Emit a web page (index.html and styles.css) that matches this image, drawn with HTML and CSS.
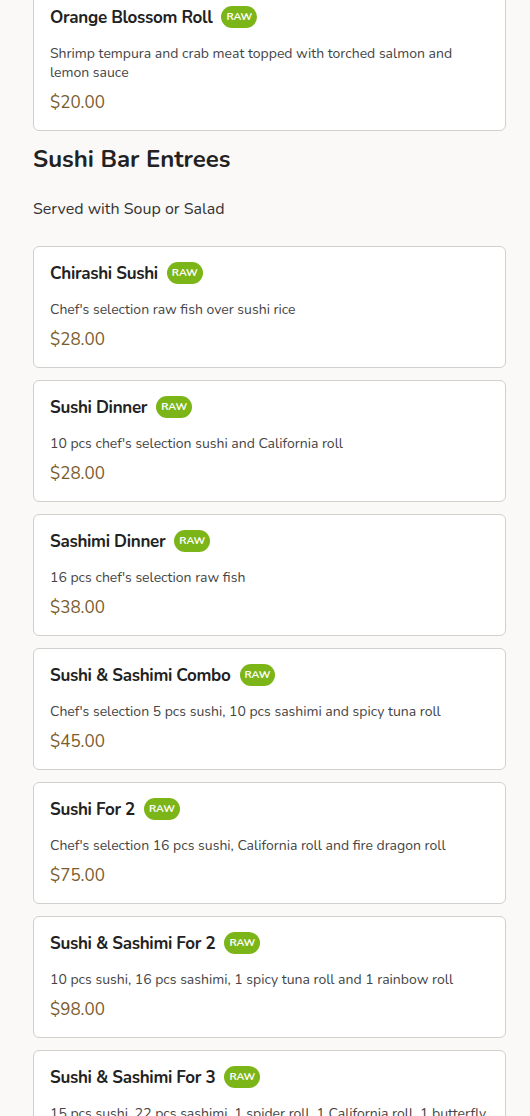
FILE: index.html
```html
<!DOCTYPE html>
<html>
<head>
<meta charset="utf-8">
<link rel="stylesheet" href="styles.css">
</head>
<body>
<div class="page">
  <div class="card first">
    <div class="title-row"><span class="title">Orange Blossom Roll</span><span class="badge">RAW</span></div>
    <p class="desc">Shrimp tempura and crab meat topped with torched salmon and lemon sauce</p>
    <div class="price">$20.00</div>
  </div>

  <h2 class="section-title">Sushi Bar Entrees</h2>
  <p class="section-sub">Served with Soup or Salad</p>

  <div class="list">
    <div class="card">
      <div class="title-row"><span class="title">Chirashi Sushi</span><span class="badge">RAW</span></div>
      <p class="desc">Chef's selection raw fish over sushi rice</p>
      <div class="price">$28.00</div>
    </div>
    <div class="card">
      <div class="title-row"><span class="title">Sushi Dinner</span><span class="badge">RAW</span></div>
      <p class="desc">10 pcs chef's selection sushi and California roll</p>
      <div class="price">$28.00</div>
    </div>
    <div class="card">
      <div class="title-row"><span class="title">Sashimi Dinner</span><span class="badge">RAW</span></div>
      <p class="desc">16 pcs chef's selection raw fish</p>
      <div class="price">$38.00</div>
    </div>
    <div class="card">
      <div class="title-row"><span class="title">Sushi &amp; Sashimi Combo</span><span class="badge">RAW</span></div>
      <p class="desc">Chef's selection 5 pcs sushi, 10 pcs sashimi and spicy tuna roll</p>
      <div class="price">$45.00</div>
    </div>
    <div class="card">
      <div class="title-row"><span class="title">Sushi For 2</span><span class="badge">RAW</span></div>
      <p class="desc">Chef's selection 16 pcs sushi, California roll and fire dragon roll</p>
      <div class="price">$75.00</div>
    </div>
    <div class="card">
      <div class="title-row"><span class="title">Sushi &amp; Sashimi For 2</span><span class="badge">RAW</span></div>
      <p class="desc">10 pcs sushi, 16 pcs sashimi, 1 spicy tuna roll and 1 rainbow roll</p>
      <div class="price">$98.00</div>
    </div>
    <div class="card">
      <div class="title-row"><span class="title">Sushi &amp; Sashimi For 3</span><span class="badge">RAW</span></div>
      <p class="desc">15 pcs sushi, 22 pcs sashimi, 1 spider roll, 1 California roll, 1 butterfly roll and 1 rainbow roll</p>
      <div class="price">$120.00</div>
    </div>
  </div>
</div>
</body>
</html>
```

FILE: styles.css
```css
html, body {
  margin: 0;
  padding: 0;
  background: #faf9f7;
}
body {
  font-family: "Nunito", "Lato", "Open Sans", sans-serif;
  color: #222;
  overflow: hidden;
}
.page {
  width: 473px;
  margin: -10px 0 0 33px;
}
.card {
  background: #fff;
  border: 1px solid #d2d0cc;
  border-radius: 6px;
  padding: 15px 16px 15px;
}
.title-row {
  display: flex;
  align-items: center;
  gap: 9px;
  height: 22px;
}
.title {
  font-size: 17px;
  font-weight: 700;
  letter-spacing: -0.3px;
  color: #222;
}
.badge {
  background: #7cb518;
  color: #fff;
  font-size: 10.5px;
  font-weight: 700;
  height: 22px;
  line-height: 22px;
  padding: 0 5px;
  border-radius: 11px;
}
.desc {
  margin: 16px 0 0;
  font-size: 14px;
  line-height: 19px;
  color: #444;
}
.price {
  margin-top: 9px;
  font-size: 17px;
  line-height: 24px;
  color: #7a5c2c;
}
.section-title {
  margin: 12px 0 0;
  font-size: 24px;
  line-height: 32px;
  font-weight: 700;
  color: #222;
}
.section-sub {
  margin: 22px 0 0;
  font-size: 16px;
  line-height: 24px;
  color: #333;
}
.list {
  margin-top: 25px;
  display: flex;
  flex-direction: column;
  gap: 12px;
}
```
